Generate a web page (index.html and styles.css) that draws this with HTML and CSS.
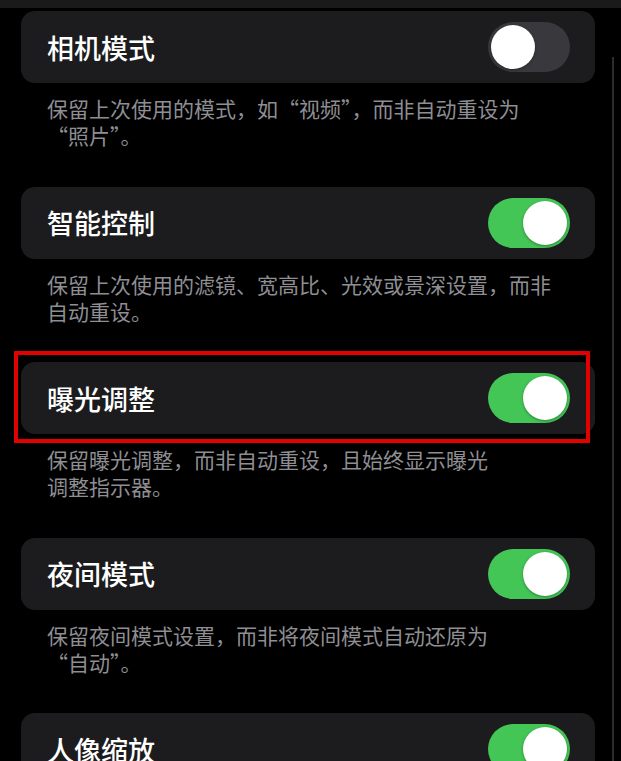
FILE: index.html
```html
<!DOCTYPE html>
<html lang="zh-CN">
<head>
<meta charset="utf-8">
<title>相机设置</title>
<link rel="stylesheet" href="styles.css">
</head>
<body>
<div class="topbar"></div>
<div class="list">
  <section class="group">
    <div class="card">
      <span class="title">相机模式</span>
      <span class="switch off"><span class="knob"></span></span>
    </div>
    <p class="desc">保留上次使用的模式，如“视频”，而非自动重设为<br>“照片”。</p>
  </section>
  <section class="group">
    <div class="card">
      <span class="title">智能控制</span>
      <span class="switch on"><span class="knob"></span></span>
    </div>
    <p class="desc">保留上次使用的滤镜、宽高比、光效或景深设置，而非<br>自动重设。</p>
  </section>
  <section class="group">
    <div class="card highlighted">
      <span class="title">曝光调整</span>
      <span class="switch on"><span class="knob"></span></span>
      <span class="redbox"></span>
    </div>
    <p class="desc">保留曝光调整，而非自动重设，且始终显示曝光<br>调整指示器。</p>
  </section>
  <section class="group">
    <div class="card">
      <span class="title">夜间模式</span>
      <span class="switch on"><span class="knob"></span></span>
    </div>
    <p class="desc">保留夜间模式设置，而非将夜间模式自动还原为<br>“自动”。</p>
  </section>
  <section class="group">
    <div class="card">
      <span class="title">人像缩放</span>
      <span class="switch on"><span class="knob"></span></span>
    </div>
  </section>
</div>
<div class="scrollbar"></div>
</body>
</html>
```
FILE: styles.css
```css
html, body {
  margin: 0;
  padding: 0;
  background: #000;
  height: 100%;
  overflow: hidden;
}
body {
  position: relative;
  font-family: "Noto Sans CJK SC", "Noto Sans", sans-serif;
  color: #fff;
}
.topbar {
  height: 8px;
  background: #1a1a1b;
}
.list {
  padding: 3px 26px 0 21px;
}
.group {
  margin-bottom: 37.5px;
}
.card {
  position: relative;
  height: 72px;
  background: #1c1c1e;
  border-radius: 14px;
  display: flex;
  align-items: center;
  justify-content: space-between;
  padding: 0 25px 0 26px;
}
.title {
  font-size: 27px;
  font-weight: 500;
  line-height: 1;
  color: #fff;
}
.switch {
  position: relative;
  width: 82px;
  height: 50px;
  border-radius: 25px;
  display: flex;
  align-items: center;
  padding: 0 3px;
  box-sizing: border-box;
}
.switch.off {
  background: #39393d;
  justify-content: flex-start;
}
.switch.on {
  background: #43c655;
  justify-content: flex-end;
}
.knob {
  width: 44px;
  height: 44px;
  border-radius: 50%;
  background: #fff;
  box-shadow: 0 1px 3px rgba(0, 0, 0, 0.35);
}
.desc {
  margin: 12px 0 0 26px;
  font-size: 21px;
  line-height: 27px;
  color: #8e8e93;
}
.redbox {
  position: absolute;
  left: -7px;
  top: -11px;
  width: 576px;
  height: 92px;
  box-sizing: border-box;
  border: 4px solid #e30000;
  pointer-events: none;
}
.scrollbar {
  position: absolute;
  left: 612px;
  top: 57px;
  bottom: 0;
  width: 2px;
  background: #2c2c2e;
}
```
